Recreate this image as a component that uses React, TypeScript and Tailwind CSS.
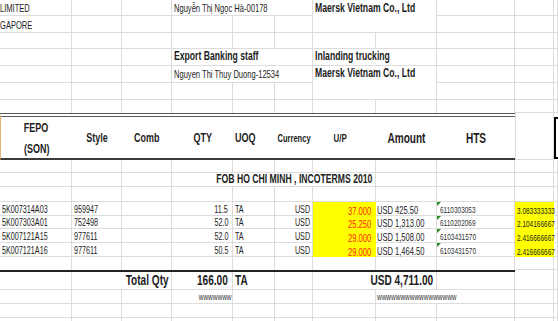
import React, { ReactNode } from 'react';

const W = ['w-[72px]', 'w-[50px]', 'w-[50px]', 'w-[61px]', 'w-[42px]', 'w-[38px]', 'w-[63px]', 'w-[61px]', 'w-[78px]', 'w-[39px]', 'w-[4px]'];

type CellProps = { i: number; r?: boolean; b?: boolean; x?: string; children?: ReactNode };

const Cell = ({ i, r = true, b = true, x = '', children }: CellProps) => (
    <div className={`${W[i]} ${r ? 'border-r' : ''} ${b ? 'border-b' : ''} relative flex h-full shrink-0 items-end border-[#dcdcdc] ${x}`}>
        {children}
    </div>
);

const L = ({ children, c = '' }: { children: ReactNode; c?: string }) => (
    <span className={`inline-block origin-left scale-x-[0.72] whitespace-nowrap leading-none ${c}`}>{children}</span>
);
const R = ({ children, c = '' }: { children: ReactNode; c?: string }) => (
    <span className={`inline-block origin-right scale-x-[0.72] whitespace-nowrap leading-none ${c}`}>{children}</span>
);
const C = ({ children, c = '' }: { children: ReactNode; c?: string }) => (
    <span className={`inline-block shrink-0 origin-center scale-x-[0.72] whitespace-nowrap leading-none ${c}`}>{children}</span>
);

// number stored as text marker
const Flag = () => <div className="absolute left-0 top-0 h-0 w-0 border-r-[4px] border-t-[4px] border-r-transparent border-t-[#1e8c1e]" />;

const Tail = () => (
    <>
        <Cell i={8} />
        <Cell i={9} />
        <Cell i={10} />
    </>
);

const rows = [
    { fepo: '5K007314A03', style: '959947', qty: '11.5', up: '37.000', amt: 'USD 425.50', hts: '6110303053', ratio: '3.083333333', h: 'h-[14px]' },
    { fepo: '5K007303A01', style: '752498', qty: '52.0', up: '25.250', amt: 'USD 1,313.00', hts: '6110202069', ratio: '2.104166667', h: 'h-[13px]' },
    { fepo: '5K007121A15', style: '977611', qty: '52.0', up: '29.000', amt: 'USD 1,508.00', hts: '6103431570', ratio: '2.416666667', h: 'h-[14px]' },
    { fepo: '5K007121A16', style: '977611', qty: '50.5', up: '29.000', amt: 'USD 1,464.50', hts: '6103431570', ratio: '2.416666667', h: 'h-[14px]' },
];

const Empty = ({ h, noB = false }: { h: string; noB?: boolean }) => (
    <div className={`flex ${h}`}>
        {[0, 1, 2, 3, 4, 5, 6, 7, 8].map(i => <Cell key={i} i={i} b={!noB} />)}
        <Cell i={9} />
        <Cell i={10} />
    </div>
);

export default function App() {
    return (
        <div className="h-[321px] w-[558px] overflow-hidden bg-white font-['Liberation_Sans',Arial,sans-serif] text-[#1c1c1c]">
            {/* r1 */}
            <div className="flex h-[16px]">
                <Cell i={0} x="pb-[2px]"><L c="text-[10.5px]">LIMITED</L></Cell>
                <Cell i={1} />
                <Cell i={2} />
                <Cell i={3} r={false} x="pb-[2px] pl-[2px]"><L c="text-[10.5px]">Nguyễn Thị Ngọc Hà-00178</L></Cell>
                <Cell i={4} r={false} />
                <Cell i={5} />
                <Cell i={6} r={false} b={false} x="pb-[2px] pl-[2px]"><L c="text-[12px] font-bold">Maersk Vietnam Co., Ltd</L></Cell>
                <Cell i={7} b={false} />
                <Tail />
            </div>
            {/* r2 */}
            <div className="flex h-[17px]">
                <Cell i={0} x="pb-[2px]"><L c="text-[10.5px]">GAPORE</L></Cell>
                <Cell i={1} />
                <Cell i={2} />
                <Cell i={3} />
                <Cell i={4} />
                <Cell i={5} />
                <Cell i={6} r={false} />
                <Cell i={7} />
                <Tail />
            </div>
            <Empty h="h-[16px]" />
            {/* r4 */}
            <div className="flex h-[17px]">
                <Cell i={0} />
                <Cell i={1} />
                <Cell i={2} />
                <Cell i={3} r={false} x="pb-[3px] pl-[2px]"><L c="text-[12px] font-bold">Export Banking staff</L></Cell>
                <Cell i={4} r={false} />
                <Cell i={5} />
                <Cell i={6} r={false} x="pb-[3px] pl-[2px]"><L c="text-[12px] font-bold">Inlanding trucking</L></Cell>
                <Cell i={7} />
                <Tail />
            </div>
            {/* r5 */}
            <div className="flex h-[17px]">
                <Cell i={0} />
                <Cell i={1} />
                <Cell i={2} />
                <Cell i={3} r={false} x="pb-[3px] pl-[2px]"><L c="text-[10.5px]">Nguyen Thi Thuy Duong-12534</L></Cell>
                <Cell i={4} r={false} />
                <Cell i={5} />
                <Cell i={6} r={false} b={false} x="pb-[4px] pl-[2px]"><L c="text-[12px] font-bold">Maersk Vietnam Co., Ltd</L></Cell>
                <Cell i={7} b={false} />
                <Tail />
            </div>
            {/* r6 */}
            <div className="flex h-[17px]">
                {[0, 1, 2, 3, 4, 5].map(i => <Cell key={i} i={i} />)}
                <Cell i={6} r={false} />
                <Cell i={7} />
                <Tail />
            </div>
            <Empty h="h-[13px]" noB />

            {/* header */}
            <div className="flex h-[47px]">
                <div className="flex h-full w-[515px] shrink-0 border-b-2 border-t-4 border-double border-b-[#3a3a3a] border-t-[#5a5a5a] border-l border-l-[#e2b479] font-bold">
                    <div className="flex w-[71px] flex-col items-center justify-center gap-[8px] pt-[2px] text-[12.5px]">
                        <C>FEPO</C>
                        <C>(SON)</C>
                    </div>
                    <div className="flex w-[50px] items-center justify-center pt-[2px]"><C c="text-[12.5px]">Style</C></div>
                    <div className="flex w-[50px] items-center justify-center pt-[1px]"><C c="text-[12.5px]">Comb</C></div>
                    <div className="flex w-[61px] items-center justify-center pt-[1px]"><C c="text-[12.5px]">QTY</C></div>
                    <div className="flex w-[42px] items-center pl-[2px] pt-[1px]"><L c="text-[12.5px]">UOQ</L></div>
                    <div className="flex w-[38px] items-center justify-center pt-[1px]"><C c="text-[10.5px] scale-x-[0.7]">Currency</C></div>
                    <div className="flex w-[63px] items-center justify-center pr-[8px] pt-[1px]"><C c="text-[11px] scale-x-[0.9]">U/P</C></div>
                    <div className="flex w-[61px] items-center justify-center pt-[1px]"><C c="text-[14px] scale-x-[0.68]">Amount</C></div>
                    <div className="flex w-[77px] items-center justify-center pt-[1px]"><C c="text-[14px] scale-x-[0.66]">HTS</C></div>
                </div>
                <div className="h-full w-[39px] shrink-0 border-b border-l border-r border-[#dcdcdc]" />
                <div className="mt-[4px] h-[42px] w-[4px] shrink-0 border-b-2 border-l-2 border-t-2 border-black" />
            </div>

            <Empty h="h-[13px]" />
            {/* FOB */}
            <div className="flex h-[14px]">
                <Cell i={0} />
                <Cell i={1} />
                <Cell i={2} />
                <Cell i={3} r={false} />
                <Cell i={4} r={false} />
                <Cell i={5} r={false} x="justify-center pb-[1px]"><C c="text-[12px] font-bold">FOB HO CHI MINH , INCOTERMS 2010</C></Cell>
                <Cell i={6} />
                <Cell i={7} />
                <Tail />
            </div>
            <Empty h="h-[15px]" />

            {/* data */}
            {rows.map((d, k) => (
                <div key={k} className={`flex ${d.h}`}>
                    <Cell i={0} x="pl-[2px]"><L c="text-[10px]">{d.fepo}</L></Cell>
                    <Cell i={1} x="pl-[2px]"><L c="text-[10px]">{d.style}</L></Cell>
                    <Cell i={2} />
                    <Cell i={3} x="justify-end pr-[4px]"><R c="text-[10px]">{d.qty}</R></Cell>
                    <Cell i={4} x="pl-[2px]"><L c="text-[10px]">TA</L></Cell>
                    <Cell i={5} x="justify-end pr-[2px]"><R c="text-[10px]">USD</R></Cell>
                    <Cell i={6} r={false} b={false} x="justify-end bg-[#ffff00] pr-[5px]"><R c="text-[10.5px] text-[#ff1a1a]">{d.up}</R></Cell>
                    <Cell i={7} x="pl-[1px]"><L c="text-[10.5px] scale-x-[0.68]">{d.amt}</L></Cell>
                    <Cell i={8} x="pl-[3px]">
                        <Flag />
                        <L c="text-[9px] scale-x-[0.66] text-[#333]">{d.hts}</L>
                    </Cell>
                    <Cell i={9} r={false} b={false} x="bg-[#ffff00] pl-[2px]"><L c="text-[9px] scale-x-[0.68]">{d.ratio}</L></Cell>
                    <Cell i={10} />
                </div>
            ))}
            <Empty h="h-[13px]" noB />

            {/* total */}
            <div className="flex h-[20px]">
                <div className="flex h-full w-[515px] shrink-0 border-t-2 border-[#222] font-bold">
                    <Cell i={0} />
                    <Cell i={1} r={false} />
                    <Cell i={2} x="justify-end pb-[2px] pr-[2px]"><R c="text-[14px] scale-x-[0.69]">Total Qty</R></Cell>
                    <Cell i={3} x="justify-end pb-[2px] pr-[4px]"><R c="text-[14px]">166.00</R></Cell>
                    <Cell i={4} x="pb-[2px] pl-[2px]"><L c="text-[14px]">TA</L></Cell>
                    <Cell i={5} />
                    <Cell i={6} r={false} />
                    <Cell i={7} x="justify-end pb-[2px] pr-[3px]"><R c="text-[14px] scale-x-[0.7]">USD 4,711.00</R></Cell>
                    <div className="h-full w-[78px] shrink-0 border-b border-r border-[#dcdcdc]" />
                </div>
                <Cell i={9} />
                <Cell i={10} />
            </div>
            {/* www */}
            <div className="flex h-[14px]">
                <Cell i={0} />
                <Cell i={1} />
                <Cell i={2} />
                <Cell i={3} x="justify-end pb-[1px] pr-[1px]"><R c="text-[9px] scale-x-[0.6] text-[#333]">wwwwwww</R></Cell>
                <Cell i={4} />
                <Cell i={5} />
                <Cell i={6} />
                <Cell i={7} r={false} x="pb-[1px] pl-[1px]"><L c="text-[9px] scale-x-[0.64] text-[#333]">wwwwwwwwwwwwwwwww</L></Cell>
                <Tail />
            </div>
            <Empty h="h-[14px]" />
            <Empty h="h-[14px]" />
        </div>
    );
}
